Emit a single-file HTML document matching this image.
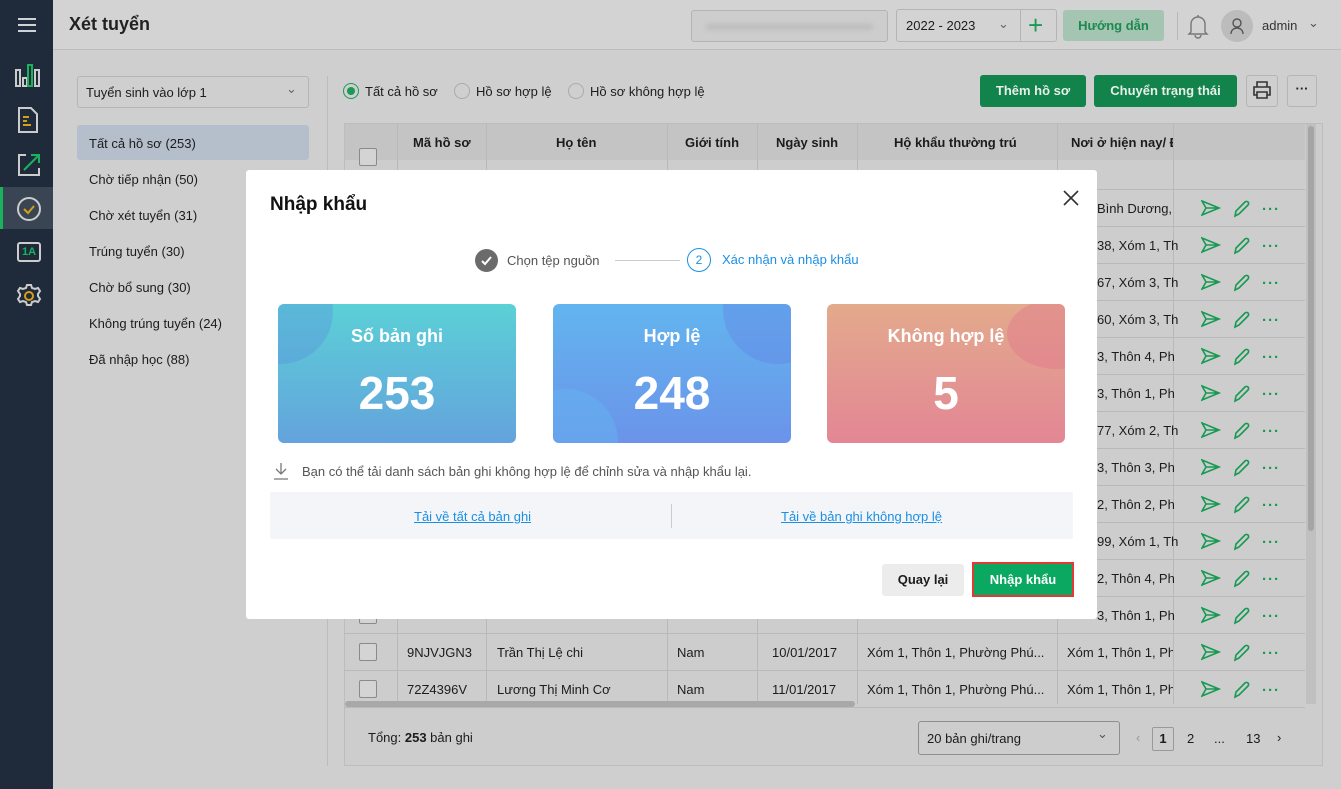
<!DOCTYPE html>
<html><head><meta charset="utf-8"><style>
*{box-sizing:border-box;margin:0;padding:0}
body{width:1341px;height:789px;overflow:hidden;position:relative;background:#cfcfcf;font-family:"Liberation Sans","Noto Sans CJK SC",sans-serif;font-size:13px;color:#1c1c1c}
.a{position:absolute}
.side{left:0;top:0;width:53px;height:789px;background:#1f2a3a}
.hdr{left:53px;top:0;width:1288px;height:50px;background:#d3d3d3;border-bottom:1px solid #bdbdbd}
.t{white-space:nowrap}
.btn{background:#11834b;color:#e6efe9;font-weight:bold;border-radius:3px;text-align:center;line-height:31px;font-size:13px}
.row{left:344px;width:961px;height:37px;border-bottom:1px solid #b9b9b9}
.cb{width:18px;height:18px;border:1px solid #8a8a8a;border-radius:2px;background:#d4d4d4}
.card{top:304px;width:238px;height:139px;border-radius:6px;overflow:hidden;color:#fff;text-align:center}
.card .ti{position:absolute;left:0;right:0;top:22px;font-size:18px;font-weight:600}
.card .n{position:absolute;left:0;right:0;top:62px;font-size:46px;font-weight:bold}
.circ{position:absolute;border-radius:50%}
</style></head><body>
<div class="a side"></div>
<div class="a" style="left:18px;top:18px;width:18px;height:2px;background:#cdd2d8;box-shadow:0 6px 0 #cdd2d8,0 12px 0 #cdd2d8"></div>
<svg class="a" style="left:14px;top:62px" width="28" height="28" viewBox="0 0 28 28" fill="none" stroke-width="2"><rect x="2" y="8" width="4" height="16" stroke="#ccc"/><rect x="9" y="16" width="4" height="8" stroke="#ccc"/><rect x="14" y="3" width="4" height="21" stroke="#18b35c"/><rect x="21" y="8" width="4" height="16" stroke="#ccc"/></svg>
<svg class="a" style="left:17px;top:106px" width="22" height="28" viewBox="0 0 22 28" fill="none" stroke-width="2"><path d="M2 2h12l6 6v18H2z" stroke="#ccc"/><path d="M6 11h6M6 15h4M6 19h8" stroke="#d4a017"/></svg>
<svg class="a" style="left:16px;top:152px" width="26" height="26" viewBox="0 0 26 26" fill="none" stroke-width="2"><path d="M10 3H3v20h20v-7" stroke="#ccc"/><path d="M8 18L23 3M15 3h8v8" stroke="#18b35c"/></svg>
<div class="a" style="left:0;top:187px;width:53px;height:42px;background:#3a4554"></div>
<div class="a" style="left:0;top:187px;width:3px;height:42px;background:#18b35c"></div>
<svg class="a" style="left:16px;top:196px" width="26" height="26" viewBox="0 0 26 26" fill="none" stroke-width="2"><circle cx="13" cy="13" r="11" stroke="#ccc"/><path d="M8 13l4 4 6-7" stroke="#d4a017"/></svg>
<div class="a t" style="left:17px;top:242px;width:24px;height:20px;border:2px solid #ccc;border-radius:3px;color:#18b35c;font-size:11px;font-weight:bold;text-align:center;line-height:16px">1A</div>
<svg class="a" style="left:16px;top:283px" width="26" height="26" viewBox="0 0 26 26" fill="none" stroke="#ccc" stroke-width="2"><path d="M11 2h4l1 3 3 1 3-1 2 3-2 3v2l2 3-2 3-3-1-3 1-1 3h-4l-1-3-3-1-3 1-2-3 2-3v-2L2 8l2-3 3 1 3-1z"/><circle cx="13" cy="13" r="4" stroke="#d4a017"/></svg>

<div class="a hdr"></div>
<div class="a t" style="left:69px;top:14px;font-size:18px;font-weight:600;color:#222">Xét tuyển</div>
<div class="a" style="left:691px;top:10px;width:197px;height:32px;border:1px solid #b4b4b4;border-radius:3px;background:#cdcdcd"><div style="margin:13px 14px;height:6px;background:#bdbdbd;border-radius:3px;filter:blur(2px)"></div></div>
<div class="a" style="left:896px;top:9px;width:161px;height:33px;border:1px solid #b4b4b4;border-radius:3px"></div>
<div class="a t" style="left:906px;top:18px">2022 - 2023</div>
<div class="a t" style="left:998px;top:16px;color:#666">⌄</div>
<div class="a" style="left:1020px;top:10px;width:1px;height:31px;background:#b4b4b4"></div>
<div class="a t" style="left:1028px;top:10px;font-size:26px;color:#1a9a55;line-height:30px">+</div>
<div class="a btn" style="left:1063px;top:10px;width:101px;height:31px;background:#a3c5b1;color:#1b8a4f;font-weight:600">Hướng dẫn</div>
<div class="a" style="left:1177px;top:12px;width:1px;height:28px;background:#b8b8b8"></div>
<svg class="a" style="left:1186px;top:12px" width="24" height="28" viewBox="0 0 24 28" fill="none" stroke="#777" stroke-width="1.4"><path d="M12 3v2M5 20V12a7 7 0 0114 0v8l2 2H3zM9 23a3 3 0 006 0"/></svg>
<div class="a" style="left:1221px;top:10px;width:32px;height:32px;border-radius:50%;background:#bcbcbc"></div>
<svg class="a" style="left:1229px;top:17px" width="16" height="18" viewBox="0 0 16 18" fill="none" stroke="#555" stroke-width="1.4"><circle cx="8" cy="6" r="4"/><path d="M2 17c0-4 3-6 6-6s6 2 6 6"/></svg>
<div class="a t" style="left:1262px;top:18px;color:#333">admin</div>
<div class="a t" style="left:1308px;top:15px;color:#555">⌄</div>

<div class="a" style="left:77px;top:76px;width:232px;height:32px;border:1px solid #b5b5b5;border-radius:3px"></div>
<div class="a t" style="left:86px;top:85px">Tuyển sinh vào lớp 1</div>
<div class="a t" style="left:286px;top:81px;color:#666">⌄</div>
<div class="a" style="left:77px;top:125px;width:232px;height:35px;background:#b4bfcb;border-radius:3px"></div>
<div class="a t" style="left:89px;top:136px">Tất cả hồ sơ (253)</div>
<div class="a t" style="left:89px;top:172px">Chờ tiếp nhận (50)</div>
<div class="a t" style="left:89px;top:208px">Chờ xét tuyển (31)</div>
<div class="a t" style="left:89px;top:244px">Trúng tuyển (30)</div>
<div class="a t" style="left:89px;top:280px">Chờ bổ sung (30)</div>
<div class="a t" style="left:89px;top:316px">Không trúng tuyển (24)</div>
<div class="a t" style="left:89px;top:352px">Đã nhập học (88)</div>
<div class="a" style="left:327px;top:76px;width:1px;height:690px;background:#bcbcbc"></div>

<div class="a" style="left:343px;top:83px;width:16px;height:16px;border:1px solid #1a9a55;border-radius:50%"><div style="margin:3px;width:8px;height:8px;border-radius:50%;background:#1a9a55"></div></div>
<div class="a t" style="left:365px;top:84px">Tất cả hồ sơ</div>
<div class="a" style="left:454px;top:83px;width:16px;height:16px;border:1px solid #aaa;border-radius:50%"></div>
<div class="a t" style="left:476px;top:84px">Hồ sơ hợp lệ</div>
<div class="a" style="left:568px;top:83px;width:16px;height:16px;border:1px solid #aaa;border-radius:50%"></div>
<div class="a t" style="left:590px;top:84px">Hồ sơ không hợp lệ</div>
<div class="a btn" style="left:980px;top:75px;width:106px;height:32px">Thêm hồ sơ</div>
<div class="a btn" style="left:1094px;top:75px;width:143px;height:32px">Chuyển trạng thái</div>
<div class="a" style="left:1246px;top:75px;width:32px;height:32px;border:1px solid #b5b5b5;border-radius:3px"></div>
<svg class="a" style="left:1252px;top:80px" width="20" height="20" viewBox="0 0 20 20" fill="none" stroke="#333" stroke-width="1.6"><path d="M5 7V2h10v5M5 15H2V7h16v8h-3M5 12h10v6H5z"/></svg>
<div class="a" style="left:1287px;top:75px;width:30px;height:32px;border:1px solid #b5b5b5;border-radius:3px;text-align:center;font-weight:bold;line-height:26px">···</div>

<div class="a" style="left:344px;top:123px;width:979px;height:643px;border:1px solid #bdbdbd;background:#cdcdcd"></div>
<div class="a" style="left:345px;top:124px;width:960px;height:36px;background:#c4c4c4"></div>
<div class="a" style="left:345px;top:160px;width:960px;height:30px;border-bottom:1px solid #b9b9b9"></div>
<div class="a" style="left:1306px;top:124px;width:10px;height:580px;background:#c0c0c0"></div>
<div class="a" style="left:1308px;top:126px;width:6px;height:405px;background:#a5a5a5;border-radius:3px"></div>
<div class="a cb" style="left:359px;top:148px"></div>
<div class="a" style="left:397px;top:124px;width:1px;height:580px;background:#b9b9b9;box-shadow:89px 0 #b9b9b9,270px 0 #b9b9b9,360px 0 #b9b9b9,460px 0 #b9b9b9,660px 0 #b9b9b9,776px 0 #b9b9b9"></div>
<div class="a t" style="left:413px;top:135px;font-weight:600">Mã hồ sơ</div>
<div class="a t" style="left:556px;top:135px;font-weight:600">Họ tên</div>
<div class="a t" style="left:685px;top:135px;font-weight:600">Giới tính</div>
<div class="a t" style="left:776px;top:135px;font-weight:600">Ngày sinh</div>
<div class="a t" style="left:894px;top:135px;font-weight:600">Hộ khẩu thường trú</div>
<div class="a t" style="left:1071px;top:135px;font-weight:600;width:102px;overflow:hidden">Nơi ở hiện nay/ Địa</div>

<div id="rows"></div>
<script>
var txt=["Bình Dương,","38, Xóm 1, Th","67, Xóm 3, Th","60, Xóm 3, Th","3, Thôn 4, Ph","3, Thôn 1, Ph","77, Xóm 2, Th","3, Thôn 3, Ph","2, Thôn 2, Ph","99, Xóm 1, Th","2, Thôn 4, Ph","3, Thôn 1, Ph"];
var h="";
for(var i=0;i<14;i++){var y=190+i*37;h+='<div class="a row" style="top:'+y+'px"></div>';
h+='<div class="a cb" style="left:359px;top:'+(y+9)+'px"></div>';
if(i<12)h+='<div class="a t" style="left:1097px;top:'+(y+11)+'px">'+txt[i]+'</div>';
h+='<svg class="a" style="left:1201px;top:'+(y+8)+'px" width="52" height="20" viewBox="0 0 52 20" fill="none" stroke="#169a52" stroke-width="1.6"><path d="M1 3l17 7-17 7 4-7zM5 10h13"/><path d="M34 18l1-5 9-9a2 2 0 013 3l-9 9z"/></svg>';
h+='<div class="a t" style="left:1262px;top:'+(y+11)+'px;color:#169a52;font-weight:bold;font-size:15px;letter-spacing:1px">···</div>';}
document.getElementById('rows').innerHTML=h;
</script>
<div class="a t" style="left:407px;top:645px">9NJVJGN3</div>
<div class="a t" style="left:497px;top:645px">Trần Thị Lệ chi</div>
<div class="a t" style="left:677px;top:645px">Nam</div>
<div class="a t" style="left:772px;top:645px">10/01/2017</div>
<div class="a t" style="left:867px;top:645px">Xóm 1, Thôn 1, Phường Phú...</div>
<div class="a t" style="left:1067px;top:645px;width:106px;overflow:hidden">Xóm 1, Thôn 1, Phường</div>
<div class="a t" style="left:407px;top:682px">72Z4396V</div>
<div class="a t" style="left:497px;top:682px">Lương Thị Minh Cơ</div>
<div class="a t" style="left:677px;top:682px">Nam</div>
<div class="a t" style="left:772px;top:682px">11/01/2017</div>
<div class="a t" style="left:867px;top:682px">Xóm 1, Thôn 1, Phường Phú...</div>
<div class="a t" style="left:1067px;top:682px;width:106px;overflow:hidden">Xóm 1, Thôn 1, Phường</div>
<div class="a" style="left:345px;top:701px;width:510px;height:6px;background:#a8a8a8;border-radius:3px"></div>
<div class="a t" style="left:368px;top:730px">Tổng: <b>253</b> bản ghi</div>
<div class="a" style="left:918px;top:721px;width:202px;height:34px;border:1px solid #8e8e8e;border-radius:3px"></div>
<div class="a t" style="left:927px;top:731px">20 bản ghi/trang</div>
<div class="a t" style="left:1097px;top:726px;color:#555">⌄</div>
<div class="a t" style="left:1136px;top:730px;color:#999">‹</div>
<div class="a" style="left:1152px;top:727px;width:22px;height:24px;border:1px solid #999;border-radius:2px;text-align:center;line-height:22px;font-weight:bold">1</div>
<div class="a t" style="left:1187px;top:731px">2</div>
<div class="a t" style="left:1214px;top:731px">...</div>
<div class="a t" style="left:1246px;top:731px">13</div>
<div class="a t" style="left:1277px;top:730px">›</div>

<!-- modal -->
<div class="a" style="left:246px;top:170px;width:851px;height:449px;background:#fff;border-radius:3px"></div>
<div class="a t" style="left:270px;top:194px;font-size:19px;font-weight:600;color:#111">Nhập khẩu</div>
<svg class="a" style="left:1062px;top:189px" width="18" height="18" viewBox="0 0 18 18" stroke="#333" stroke-width="1.6"><path d="M2 2l14 14M16 2L2 16"/></svg>
<div class="a" style="left:475px;top:249px;width:23px;height:23px;border-radius:50%;background:#6b6b6b"></div>
<svg class="a" style="left:480px;top:254px" width="13" height="13" viewBox="0 0 13 13" fill="none" stroke="#fff" stroke-width="2"><path d="M2 7l3 3 6-7"/></svg>
<div class="a t" style="left:507px;top:253px;color:#555">Chọn tệp nguồn</div>
<div class="a" style="left:615px;top:260px;width:65px;height:1px;background:#ccc"></div>
<div class="a" style="left:687px;top:248px;width:24px;height:24px;border-radius:50%;border:1px solid #1a8fe3;color:#1a8fe3;text-align:center;line-height:22px;font-size:12px">2</div>
<div class="a t" style="left:722px;top:252px;color:#1a8fe3">Xác nhận và nhập khẩu</div>

<div class="a card" style="left:278px;background:linear-gradient(180deg,#5bd0d6,#64a3dd)"><div class="circ" style="left:-50px;top:-45px;width:105px;height:105px;background:rgba(90,140,220,.35)"></div><div class="ti">Số bản ghi</div><div class="n">253</div></div>
<div class="a card" style="left:553px;background:linear-gradient(180deg,#62b5ee,#6b93ea)"><div class="circ" style="left:170px;top:-50px;width:110px;height:110px;background:rgba(100,130,230,.4)"></div><div class="circ" style="left:-40px;top:85px;width:105px;height:105px;background:rgba(100,180,240,.5)"></div><div class="ti">Hợp lệ</div><div class="n">248</div></div>
<div class="a card" style="left:827px;background:linear-gradient(180deg,#e3aa8c,#e38695)"><div class="circ" style="left:180px;top:-5px;width:100px;height:70px;background:rgba(225,120,140,.45)"></div><div class="ti">Không hợp lệ</div><div class="n">5</div></div>

<svg class="a" style="left:273px;top:462px" width="16" height="18" viewBox="0 0 16 18" fill="none" stroke="#777" stroke-width="1.3"><path d="M8 1v11M3 7l5 5 5-5M1 17h14"/></svg>
<div class="a t" style="left:302px;top:464px;color:#555">Bạn có thể tải danh sách bản ghi không hợp lệ để chỉnh sửa và nhập khẩu lại.</div>
<div class="a" style="left:270px;top:492px;width:803px;height:47px;background:#f3f5f8;border-radius:2px"></div>
<div class="a" style="left:671px;top:504px;width:1px;height:24px;background:#ccc"></div>
<div class="a t" style="left:414px;top:509px;color:#1a8fe3;text-decoration:underline">Tải về tất cả bản ghi</div>
<div class="a t" style="left:781px;top:509px;color:#1a8fe3;text-decoration:underline">Tải về bản ghi không hợp lệ</div>
<div class="a" style="left:882px;top:564px;width:82px;height:32px;background:#ececec;border-radius:3px;text-align:center;line-height:32px;font-weight:600">Quay lại</div>
<div class="a" style="left:972px;top:562px;width:102px;height:35px;border:2px solid #e53935;background:#0aa860;color:#fff;text-align:center;line-height:31px;font-weight:600">Nhập khẩu</div>
</body></html>
